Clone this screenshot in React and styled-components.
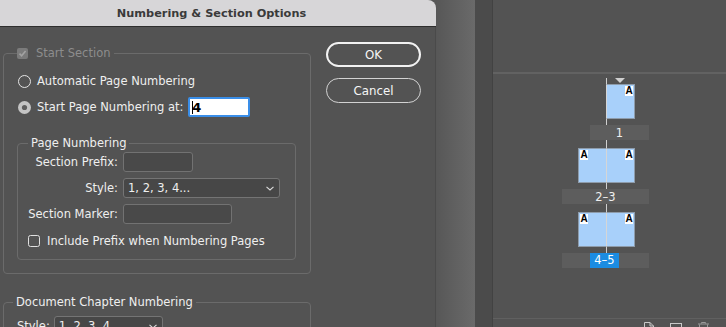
import React from 'react';
import styled, { createGlobalStyle } from 'styled-components';

const GlobalStyle = createGlobalStyle`
  html, body { margin: 0; padding: 0; background: #575757; overflow: hidden; }
  body {
    font-family: "DejaVu Sans", "Liberation Sans", sans-serif;
    font-size: 11.5px;
    color: #efefef;
  }
  * { box-sizing: border-box; }
`;

const Screen = styled.div`
  display: flex;
  width: 726px;
  height: 327px;
  overflow: hidden;
  background: #575757;
`;

/* ---------- Dialog ---------- */
const Dialog = styled.div`
  width: 436px;
  flex: none;
  display: flex;
  flex-direction: column;
`;

const TitleBar = styled.div`
  height: 27px;
  flex: none;
  background: #d7d6d8;
  border-bottom: 1px solid #2e2e2e;
  border-top-right-radius: 8px;
  display: flex;
  align-items: center;
  justify-content: center;
  padding-right: 13px;
  color: #3a3a3a;
  font-weight: bold;
  font-size: 11.3px;
`;

const DialogBody = styled.div`
  flex: 1;
  display: flex;
  align-items: flex-start;
  gap: 15px;
  padding: 19px 0 0 3px;
  background: #535353;
  border-right: 1px solid #4a4a4a;
`;

const MainColumn = styled.div`
  width: 308px;
  flex: none;
  display: flex;
  flex-direction: column;
`;

const Group = styled.fieldset`
  margin: ${p => p.$margin || '0'};
  padding: ${p => p.$pad};
  border: 1px solid #6b6b6b;
  border-radius: 4px;
  min-width: 0;
`;

const Legend = styled.legend`
  padding: ${p => p.$pad || '0 3px'};
  line-height: 14px;
  height: 14px;
  color: ${p => (p.$disabled ? '#8d8d8d' : '#efefef')};
`;

const LegendInner = styled.span`
  display: inline-flex;
  align-items: center;
  gap: 8px;
  height: 14px;
`;

const RadioRow = styled.div`
  display: flex;
  align-items: center;
  gap: 6px;
  height: 20px;
  padding-left: 1px;
  margin-top: ${p => p.$mt}px;
`;

const NumberField = styled.div`
  width: 62px;
  height: 20px;
  margin-left: -1px;
  background: #ffffff;
  border: 2px solid #3a8ee8;
  border-radius: 2px;
  display: flex;
  align-items: center;
  padding-left: 2px;
  color: #000;
  font-size: 13px;
  font-weight: bold;
`;

const Caret = styled.span`
  width: 1px;
  height: 13px;
  background: #000;
  margin-right: -1px;
`;

const FormGrid = styled.div`
  display: grid;
  grid-template-columns: 90px auto;
  column-gap: 5px;
  row-gap: 6px;
  align-items: center;
  margin-top: 2px;
`;

const FieldLabel = styled.span`
  justify-self: end;
  white-space: nowrap;
`;

const TextBox = styled.div`
  width: ${p => p.$w}px;
  height: 20px;
  background: #494949;
  border: 1px solid #727272;
  border-radius: 3px;
`;

const Select = styled.div`
  width: ${p => p.$w}px;
  height: 20px;
  background: #474747;
  border: 1px solid #747474;
  border-radius: 3px;
  display: flex;
  align-items: center;
  justify-content: space-between;
  padding: 0 5px 0 4px;
  color: #efefef;
`;

const CheckRow = styled.div`
  display: flex;
  align-items: center;
  gap: 7px;
  height: 20px;
  margin-top: 7px;
`;

const InlineRow = styled.div`
  display: flex;
  align-items: center;
  gap: 4px;
  padding-left: 4px;
  margin-top: 7px;
`;

const ButtonColumn = styled.div`
  display: flex;
  flex-direction: column;
  gap: 11px;
  margin-top: -4px;
`;

const Button = styled.div`
  width: 95px;
  height: 25px;
  border-radius: 13px;
  border: ${p => (p.$primary ? '2px solid #f2f2f2' : '1px solid #d2d2d2')};
  display: flex;
  align-items: center;
  justify-content: center;
  color: #f6f6f6;
  font-size: 11.8px;
`;

/* ---------- side strips ---------- */
const GradientStrip = styled.div`
  width: 39px;
  flex: none;
  background: linear-gradient(to right, #575757, #6a6a6a);
`;

const DarkStrip = styled.div`
  width: 18px;
  flex: none;
  background: #4b4b4b;
  border-right: 1px solid #424242;
`;

/* ---------- Pages panel ---------- */
const Panel = styled.div`
  flex: 1;
  display: flex;
  flex-direction: column;
  background: #535353;
`;

const PanelTop = styled.div`
  height: 74px;
  flex: none;
  border-bottom: 2px solid #626262;
`;

const PagesArea = styled.div`
  padding: 4px 0 0 69px;
`;

const SpreadColumn = styled.div`
  width: 87px;
  display: flex;
  flex-direction: column;
  background: linear-gradient(to right, transparent 44px, #cfcfcf 44px, #cfcfcf 45px, transparent 45px);
`;

const MarkerRow = styled.div`
  height: 6px;
  display: flex;
  align-items: flex-start;
  padding-left: 53px;
  & > svg { display: block; }
`;

const PageRow = styled.div`
  display: flex;
  padding-left: ${p => p.$offset}px;
  margin-top: ${p => p.$mt || 0}px;
`;

const Page = styled.div`
  position: relative;
  width: ${p => p.$w || 28}px;
  height: 35px;
  background: #a8d0fa;
  border: 1px solid #8e9cab;
  ${p => p.$side === 'left' && 'border-right: none;'}
  ${p => p.$side === 'right' && 'border-left: 1px solid #d6d6d6;'}
`;

const ATag = styled.span`
  position: absolute;
  top: 1px;
  ${p => (p.$left ? 'left: 1px;' : 'right: 1px;')}
  width: 8px;
  height: 10px;
  background: #fff;
  color: #000;
  font-family: "Liberation Sans", Arial, sans-serif;
  font-weight: bold;
  font-size: 10px;
  line-height: 10px;
  text-align: center;
`;

const LabelBar = styled.div`
  width: ${p => p.$w}px;
  align-self: flex-end;
  height: 15px;
  margin-top: 6px;
  background: #5d5d5d;
  display: flex;
  align-items: center;
  justify-content: center;
  color: #efefef;
  font-size: 11.5px;
`;

const Highlight = styled.span`
  height: 15px;
  line-height: 15px;
  padding: 0 4px;
  margin-right: 2px;
  background: #1b8ce2;
  color: #fff;
`;

const Footer = styled.div`
  margin-top: auto;
  height: 9px;
  flex: none;
  border-top: 1px solid #606060;
  display: flex;
  justify-content: flex-end;
  align-items: flex-start;
  gap: 16px;
  padding: 3px 17px 0 0;
`;

/* ---------- small drawings ---------- */
const DisabledCheck = () => (
  <svg width="11" height="11" viewBox="0 0 11 11">
    <rect x="0" y="0" width="11" height="11" rx="2" fill="#7b7b7b" />
    <path d="M2.5 5.6 L4.6 7.7 L8.6 3" stroke="#a3a3a3" strokeWidth="1.6" fill="none" />
  </svg>
);

const Radio = ({ on }) => (
  <svg width="13" height="13" viewBox="0 0 13 13">
    {on ? (
      <>
        <circle cx="6.5" cy="6.5" r="6.5" fill="#c4c4c4" />
        <circle cx="6.5" cy="6.5" r="2.6" fill="#5e5e5e" />
      </>
    ) : (
      <circle cx="6.5" cy="6.5" r="6" fill="none" stroke="#e4e4e4" strokeWidth="1" />
    )}
  </svg>
);

const EmptyCheck = () => (
  <svg width="12" height="12" viewBox="0 0 12 12">
    <rect x="0.5" y="0.5" width="11" height="11" rx="2" fill="none" stroke="#e0e0e0" />
  </svg>
);

const Chevron = () => (
  <svg width="8" height="5" viewBox="0 0 8 5">
    <path d="M0.5 0.8 L4 4 L7.5 0.8" stroke="#dcdcdc" strokeWidth="1.1" fill="none" />
  </svg>
);

const Triangle = () => (
  <svg width="10" height="5" viewBox="0 0 10 5">
    <path d="M0 0 H10 L5 5 Z" fill="#d0d0d0" />
  </svg>
);

const NewPageIcon = () => (
  <svg width="10" height="12" viewBox="0 0 10 12">
    <path d="M0.5 0.5 H6 L9.5 4 V11.5 H0.5 Z M6 0.5 V4 H9.5" stroke="#c8c8c8" fill="none" />
  </svg>
);

const RectIcon = () => (
  <svg width="12" height="12" viewBox="0 0 12 12">
    <rect x="0.5" y="1.5" width="11" height="9" stroke="#c8c8c8" fill="none" />
  </svg>
);

const TrashIcon = () => (
  <svg width="11" height="12" viewBox="0 0 11 12">
    <path d="M3.5 1.5 V0.5 H7.5 V1.5 M0 2 H11 M1.5 2.5 V11.5 H9.5 V2.5" stroke="#9a9a9a" fill="none" />
  </svg>
);

export default function App() {
  return (
    <>
      <GlobalStyle />
      <Screen>
        <Dialog>
          <TitleBar>Numbering &amp; Section Options</TitleBar>
          <DialogBody>
            <MainColumn>
              <Group $pad="0 14px 13px 13px">
                <Legend $disabled $pad="0 4px 0 0">
                  <LegendInner>
                    <DisabledCheck />
                    Start Section
                  </LegendInner>
                </Legend>
                <RadioRow $mt={11}>
                  <Radio />
                  <span>Automatic Page Numbering</span>
                </RadioRow>
                <RadioRow $mt={6}>
                  <Radio on />
                  <span>Start Page Numbering at:</span>
                  <NumberField>
                    <Caret />4
                  </NumberField>
                </RadioRow>
                <Group $margin="19px 0 0 0" $pad="0 10px 8px 10px">
                  <Legend>Page Numbering</Legend>
                  <FormGrid>
                    <FieldLabel>Section Prefix:</FieldLabel>
                    <TextBox $w={70} />
                    <FieldLabel>Style:</FieldLabel>
                    <Select $w={157}>
                      <span>1, 2, 3, 4...</span>
                      <Chevron />
                    </Select>
                    <FieldLabel>Section Marker:</FieldLabel>
                    <TextBox $w={109} />
                  </FormGrid>
                  <CheckRow>
                    <EmptyCheck />
                    <span>Include Prefix when Numbering Pages</span>
                  </CheckRow>
                </Group>
              </Group>
              <Group $margin="21px 0 0 0" $pad="0 9px 0 9px">
                <Legend>Document Chapter Numbering</Legend>
                <InlineRow>
                  <span>Style:</span>
                  <Select $w={109}>
                    <span>1, 2, 3, 4...</span>
                    <Chevron />
                  </Select>
                </InlineRow>
              </Group>
            </MainColumn>
            <ButtonColumn>
              <Button $primary>OK</Button>
              <Button>Cancel</Button>
            </ButtonColumn>
          </DialogBody>
        </Dialog>
        <GradientStrip />
        <DarkStrip />
        <Panel>
          <PanelTop />
          <PagesArea>
            <SpreadColumn>
              <MarkerRow>
                <Triangle />
              </MarkerRow>
              <PageRow $offset={44}>
                <Page $w={29} style={{ borderLeftColor: '#d6d6d6' }}>
                  <ATag>A</ATag>
                </Page>
              </PageRow>
              <LabelBar $w={59}>1</LabelBar>
              <PageRow $offset={16} $mt={8}>
                <Page $side="left">
                  <ATag $left>A</ATag>
                </Page>
                <Page $side="right" $w={29}>
                  <ATag>A</ATag>
                </Page>
              </PageRow>
              <LabelBar $w={87}>2–3</LabelBar>
              <PageRow $offset={16} $mt={8}>
                <Page $side="left">
                  <ATag $left>A</ATag>
                </Page>
                <Page $side="right" $w={29}>
                  <ATag>A</ATag>
                </Page>
              </PageRow>
              <LabelBar $w={87}>
                <Highlight>4–5</Highlight>
              </LabelBar>
            </SpreadColumn>
          </PagesArea>
          <Footer>
            <NewPageIcon />
            <RectIcon />
            <TrashIcon />
          </Footer>
        </Panel>
      </Screen>
    </>
  );
}
